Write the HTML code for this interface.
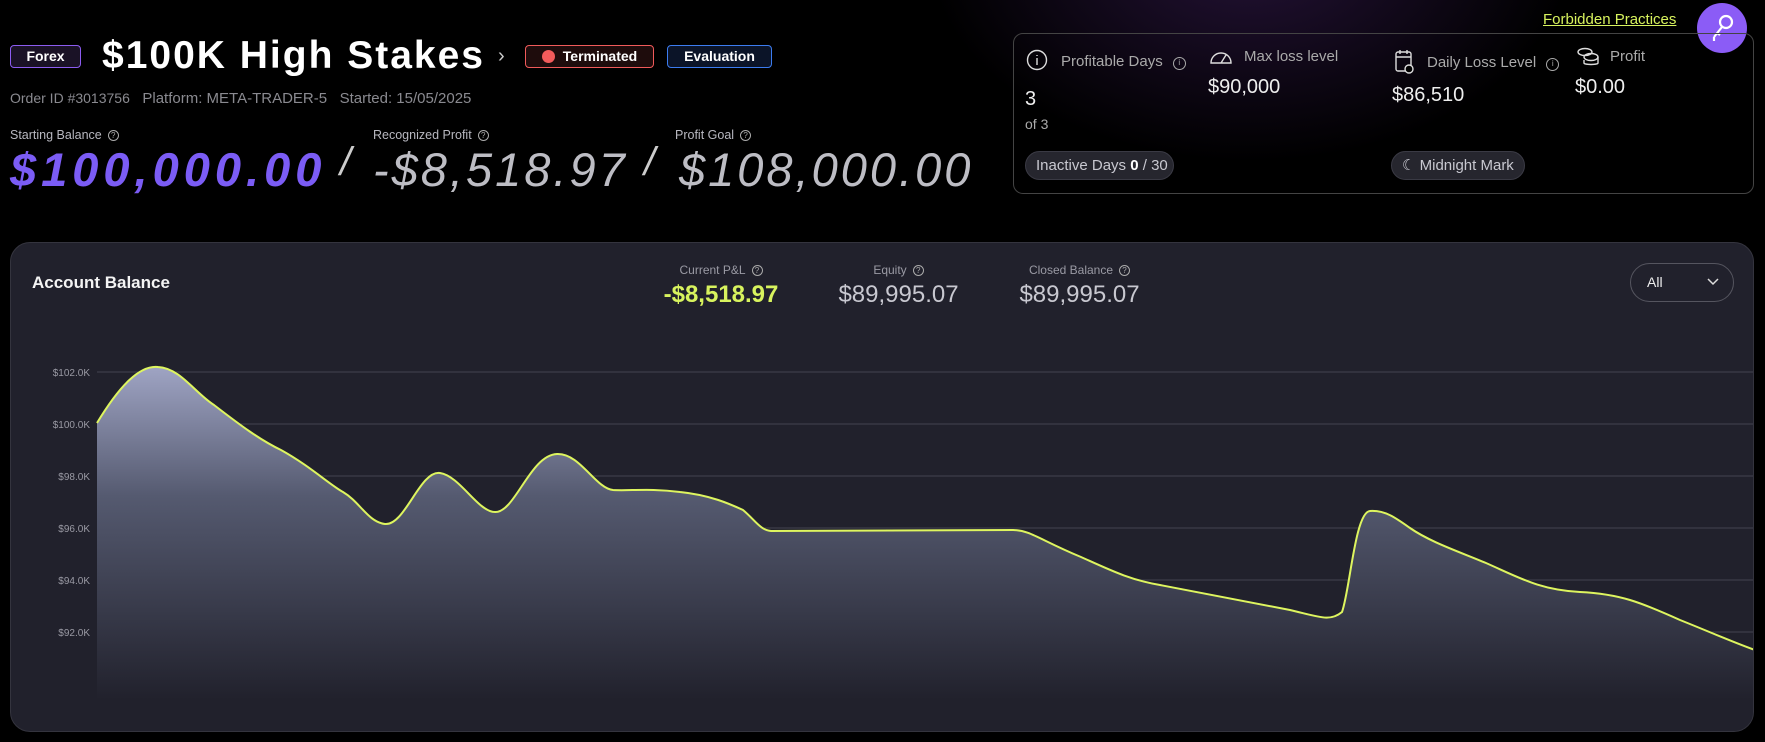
<!DOCTYPE html>
<html><head><meta charset="utf-8"><style>
*{margin:0;padding:0;box-sizing:border-box}
body{width:1765px;height:742px;background:#000;font-family:"Liberation Sans",sans-serif;color:#fff;position:relative;overflow:hidden}
.a{position:absolute;white-space:nowrap}
.glow{position:absolute;left:900px;top:-200px;width:700px;height:380px;background:radial-gradient(ellipse at 50% 40%,rgba(80,40,120,.45),rgba(0,0,0,0) 65%)}
.badge{position:absolute;top:45px;height:23px;border-radius:4px;font-size:14px;font-weight:bold;line-height:21px;text-align:center}
.sub{color:#8a8a90;font-size:15px}
.lbl{color:#b8b8c0;font-size:12.5px}
.q{display:inline-block;width:11px;height:11px;border:1px solid #aaa;border-radius:50%;font-size:8px;line-height:9px;text-align:center;color:#aaa;margin-left:6px;vertical-align:1px}
.big{font-size:47px;font-style:italic;letter-spacing:3px}
.pill{position:absolute;top:151px;height:29px;border-radius:15px;background:#26262e;border:1px solid #3a3a44;color:#c8c8d0;font-size:15px;line-height:27px;padding:0 10px;white-space:nowrap}
.rl{color:#aaa;font-size:15px}
.rv{color:#eee;font-size:20px}
</style></head><body>
<div class="glow"></div>
<div class="badge" style="left:10px;width:71px;border:1px solid #8c5cf0;background:#1a1226">Forex</div>
<div class="a" style="left:102px;top:34px;font-size:39px;font-weight:bold;letter-spacing:2px">$100K High Stakes</div>
<div class="a" style="left:498px;top:45px;font-size:20px;color:#ccc">›</div>
<div class="badge" style="left:525px;width:129px;border:1px solid #f05a5a;background:#1e0c0c"><span style="display:inline-block;width:13px;height:13px;border-radius:50%;background:#f25b5b;vertical-align:-2px;margin-right:8px"></span>Terminated</div>
<div class="badge" style="left:667px;width:105px;border:1px solid #3c7cf0;background:#0b1428">Evaluation</div>
<div class="a sub" style="left:10px;top:90px"><span style="font-size:14px">Order ID #3013756</span>&nbsp;&nbsp;&nbsp;Platform: META-TRADER-5&nbsp;&nbsp;&nbsp;Started: 15/05/2025</div>
<div class="a lbl" style="left:10px;top:128px">Starting Balance<span class="q">?</span></div>
<div class="a lbl" style="left:373px;top:128px">Recognized Profit<span class="q">?</span></div>
<div class="a lbl" style="left:675px;top:128px">Profit Goal<span class="q">?</span></div>
<div class="a big" style="left:10px;top:142px;color:#7b5cf5;font-weight:bold;letter-spacing:5px">$100,000.00</div>
<div class="a" style="left:340px;top:140px;font-size:40px;color:#ccc;font-style:italic">/</div>
<div class="a big" style="left:373px;top:142px;color:#bdbdc4">-$8,518.97</div>
<div class="a" style="left:644px;top:140px;font-size:40px;color:#ccc;font-style:italic">/</div>
<div class="a big" style="left:679px;top:142px;color:#bdbdc4">$108,000.00</div>

<div class="a" style="left:1543px;top:11px;font-size:15px;color:#d8f35e;text-decoration:underline">Forbidden Practices</div>
<div class="a" style="left:1697px;top:3px;width:50px;height:50px;border-radius:50%;background:#8b5cf6"><svg width="50" height="50" viewBox="0 0 50 50" fill="none" stroke="#fff" stroke-width="2.2"><circle cx="29" cy="19" r="6"/><path d="M25 24 L17 34 M17 34 L17 38 M20 30 L23 32"/></svg></div>
<div class="a" style="left:1013px;top:33px;width:741px;height:161px;border:1px solid #444;border-radius:10px"></div>
<svg class="a" style="left:1026px;top:49px" width="22" height="22" fill="none" stroke="#ddd" stroke-width="1.4"><circle cx="11" cy="11" r="9.5"/><path d="M11 9v7M11 6v1"/></svg>
<div class="a rl" style="left:1061px;top:53px">Profitable Days<span class="q" style="width:13px;height:13px;margin-left:10px">i</span></div>
<div class="a" style="left:1025px;top:88px;font-size:20px;color:#eee">3</div>
<div class="a" style="left:1025px;top:116px;font-size:14px;color:#aaa">of 3</div>
<svg class="a" style="left:1209px;top:46px" width="24" height="20" fill="none" stroke="#ddd" stroke-width="1.4"><path d="M2 17a10 10 0 0 1 20 0zM12 17l5-8"/></svg>
<div class="a rl" style="left:1244px;top:48px">Max loss level</div>
<div class="a rv" style="left:1208px;top:76px">$90,000</div>
<svg class="a" style="left:1394px;top:48px" width="20" height="26" fill="none" stroke="#ddd" stroke-width="1.4"><rect x="2" y="4" width="15" height="19" rx="2"/><path d="M2 9h15M6 2v4M13 2v4"/><circle cx="15" cy="21" r="4" fill="#000"/></svg>
<div class="a rl" style="left:1427px;top:54px">Daily Loss Level<span class="q" style="width:13px;height:13px;margin-left:10px">i</span></div>
<div class="a rv" style="left:1392px;top:84px">$86,510</div>
<svg class="a" style="left:1576px;top:46px" width="24" height="20" fill="none" stroke="#ddd" stroke-width="1.4"><ellipse cx="9" cy="6" rx="7" ry="3.5"/><ellipse cx="15" cy="11" rx="7" ry="3.5"/><path d="M8 14v3c0 2 14 2 14 0v-6"/></svg>
<div class="a rl" style="left:1610px;top:48px">Profit</div>
<div class="a rv" style="left:1575px;top:76px">$0.00</div>
<div class="pill" style="left:1025px;width:149px">Inactive Days <b style="color:#fff">0</b> / 30</div>
<div class="pill" style="left:1391px;width:134px">☾ Midnight Mark</div>

<div class="a" style="left:10px;top:242px;width:1744px;height:490px;background:#21212c;border:1px solid #34343e;border-radius:20px;overflow:hidden">
<svg width="1765" height="742" style="position:absolute;left:-11px;top:-243px" viewBox="0 0 1765 742">
<defs><linearGradient id="g" x1="0" y1="360" x2="0" y2="700" gradientUnits="userSpaceOnUse"><stop offset="0" stop-color="#a3a8c8"/><stop offset=".4" stop-color="#555a70"/><stop offset="1" stop-color="#21212c"/></linearGradient></defs>
<g stroke="#44444f" stroke-width="1"><path d="M97 372H1755M97 424H1755M97 476H1755M97 528H1755M97 580H1755M97 632H1755"/></g>
<g fill="#9a9aa4" font-size="10" font-family="Liberation Sans" text-anchor="end"><text x="90" y="376">$102.0K</text><text x="90" y="428">$100.0K</text><text x="90" y="480">$98.0K</text><text x="90" y="532">$96.0K</text><text x="90" y="584">$94.0K</text><text x="90" y="636">$92.0K</text></g>
<path fill="url(#g)" d="M97 423 C120 385 140 365 158 367 C180 368 195 393 214 405 C240 425 260 440 281 450 C310 466 330 485 343 492 C360 502 368 522 385 524 C405 526 420 470 440 473 C460 476 478 512 495 512 C515 513 530 455 557 454 C580 453 595 488 613 490 C630 491 650 488 680 492 C710 495 730 504 743 510 C755 520 760 530 771 531 L1013 530 C1030 530 1040 540 1081 557 C1110 570 1130 580 1160 585 C1200 593 1240 600 1290 610 C1320 617 1330 622 1342 612 C1350 590 1355 512 1370 511 C1385 510 1396 518 1410 528 C1430 542 1460 552 1486 563 C1520 578 1540 590 1580 592 C1620 594 1640 602 1680 620 C1710 632 1735 643 1755 650 L1755 740 L97 740Z"/>
<path fill="none" stroke="#def55f" stroke-width="2" d="M97 423 C120 385 140 365 158 367 C180 368 195 393 214 405 C240 425 260 440 281 450 C310 466 330 485 343 492 C360 502 368 522 385 524 C405 526 420 470 440 473 C460 476 478 512 495 512 C515 513 530 455 557 454 C580 453 595 488 613 490 C630 491 650 488 680 492 C710 495 730 504 743 510 C755 520 760 530 771 531 L1013 530 C1030 530 1040 540 1081 557 C1110 570 1130 580 1160 585 C1200 593 1240 600 1290 610 C1320 617 1330 622 1342 612 C1350 590 1355 512 1370 511 C1385 510 1396 518 1410 528 C1430 542 1460 552 1486 563 C1520 578 1540 590 1580 592 C1620 594 1640 602 1680 620 C1710 632 1735 643 1755 650"/>
</svg>
<div class="a" style="left:21px;top:30px;font-size:17px;font-weight:bold;color:#f4f4f4">Account Balance</div>
<div class="a" style="left:643px;top:20px;width:134px;text-align:center;font-size:12px;color:#9a9aa4">Current P&amp;L<span class="q">?</span></div>
<div class="a" style="left:643px;top:38px;width:134px;text-align:center;font-size:24px;color:#d8f35e;font-weight:bold">-$8,518.97</div>
<div class="a" style="left:815px;top:20px;width:145px;text-align:center;font-size:12px;color:#9a9aa4">Equity<span class="q">?</span></div>
<div class="a" style="left:815px;top:38px;width:145px;text-align:center;font-size:24px;color:#c8c8d0">$89,995.07</div>
<div class="a" style="left:996px;top:20px;width:145px;text-align:center;font-size:12px;color:#9a9aa4">Closed Balance<span class="q">?</span></div>
<div class="a" style="left:996px;top:38px;width:145px;text-align:center;font-size:24px;color:#c8c8d0">$89,995.07</div>
<div class="a" style="left:1619px;top:20px;width:104px;height:39px;border:1px solid #55555f;border-radius:20px;font-size:14px;line-height:37px;padding-left:16px;color:#eee">All<svg style="position:absolute;right:14px;top:14px" width="12" height="8" fill="none" stroke="#ddd" stroke-width="1.5"><path d="M1 1l5 5 5-5"/></svg></div>
</div>
</body></html>
